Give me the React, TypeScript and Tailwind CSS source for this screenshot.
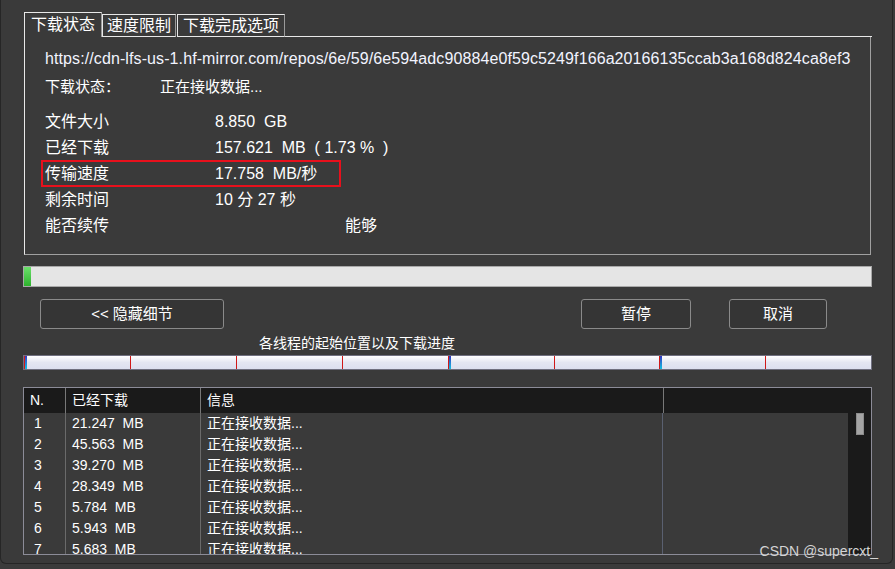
const FONT = "font-['Liberation_Sans','Noto_Sans_CJK_SC',sans-serif]"

const rows = [
  ['1', '21.247  MB'],
  ['2', '45.563  MB'],
  ['3', '39.270  MB'],
  ['4', '28.349  MB'],
  ['5', '5.784  MB'],
  ['6', '5.943  MB'],
  ['7', '5.683  MB'],
]

const info = [
  ['文件大小', '8.850  GB'],
  ['已经下载', '157.621  MB  ( 1.73 %  )'],
  ['传输速度', '17.758  MB/秒'],
  ['剩余时间', '10 分 27 秒'],
]

// thread start markers, k * 105.9px from the left edge
const markers = [0, 1, 2, 3, 4, 5, 6, 7]
const blue = [0, 4, 6]

export default function App() {
  return (
    <div className={`w-[895px] h-[569px] bg-[#3b3b3b] overflow-hidden ${FONT} text-white`}>
      <div className="relative w-[893px] h-[564px] bg-[#3a3a3a] border-l border-r border-b border-[#262626] rounded-b-[6px] px-[21px] pt-[12px]">
        {/* tabs */}
        <div className="flex items-end h-[25px] ml-[2px]">
          <div className="h-[25px] w-[78px] border-t border-l border-[#e8e8e8] border-r border-r-[#9a9a9a] flex items-center justify-center text-[16px] leading-none">
            下载状态
          </div>
          <div className="h-[23px] w-[74px] border-t border-l border-[#e8e8e8] border-r border-r-[#9a9a9a] border-b border-b-[#e8e8e8] flex items-center justify-center text-[16px] leading-none">
            速度限制
          </div>
          <div className="h-[23px] w-[108px] ml-[1px] border-t border-l border-[#e8e8e8] border-r border-r-[#9a9a9a] border-b border-b-[#e8e8e8] flex items-center justify-center text-[16px] leading-none">
            下载完成选项
          </div>
          <div className="flex-1 border-b border-[#e8e8e8] mr-[-1px]" />
        </div>

        {/* details panel */}
        <div className="ml-[2px] w-[847px] h-[218px] border-l border-[#e8e8e8] border-r border-b border-r-[#a0a0a0] border-b-[#a0a0a0] pl-[20px] pt-[9px]">
          <div className="h-[26px] flex items-center text-[16px] tracking-[0.1px] text-[#f2f4ff] whitespace-nowrap">
            https://cdn-lfs-us-1.hf-mirror.com/repos/6e/59/6e594adc90884e0f59c5249f166a20166135ccab3a168d824ca8ef3
          </div>
          <div className="h-[26px] mt-[2px] flex items-center text-[15px]">
            <span className="w-[115px]">下载状态：</span>
            <span>正在接收数据...</span>
          </div>
          <div className="mt-[9px]">
            {info.map(([k, v]) => (
              <div key={k} className="relative h-[26px] flex items-center text-[16px] whitespace-pre">
                <span className="w-[170px]">{k}</span>
                <span>{v}</span>
                {k === '传输速度' && (
                  <div className="absolute left-[-4px] top-[-1px] w-[300px] h-[27px] border-[2.5px] border-[#e8101c]" />
                )}
              </div>
            ))}
            <div className="h-[26px] flex items-center text-[16px]">
              <span className="w-[300px]">能否续传</span>
              <span>能够</span>
            </div>
          </div>
        </div>

        {/* overall progress */}
        <div className="mt-[11px] ml-[1px] w-[849px] h-[21px] border border-[#a8a8a8] bg-[#e5e5e5] flex">
          <div className="w-[7px] h-full bg-gradient-to-b from-[#6ae06a] to-[#2cb22c]" />
        </div>

        {/* buttons */}
        <div className="mt-[12px] flex h-[30px]">
          <button className="ml-[18px] w-[184px] h-[30px] border border-[#8a8a8a] rounded-[3px] bg-[#353535] text-[15px]">
            {'<< 隐藏细节'}
          </button>
          <button className="ml-[357px] w-[110px] h-[30px] border border-[#8a8a8a] rounded-[3px] bg-[#353535] text-[15px]">
            暂停
          </button>
          <button className="ml-[38px] w-[98px] h-[30px] border border-[#8a8a8a] rounded-[3px] bg-[#353535] text-[15px]">
            取消
          </button>
        </div>

        {/* per-thread progress */}
        <div className="mt-[6px] h-[16px] flex items-center pl-[237px] text-[14px] leading-none">
          各线程的起始位置以及下载进度
        </div>
        <div className="relative mt-[4px] ml-[1px] w-[849px] h-[15px] border border-[#707080] bg-gradient-to-b from-[#ffffff] via-[#e4e6f2] to-[#dcdfef]">
          {markers.map(k => (
            <div key={k} className="absolute top-0 bottom-0" style={{ left: Math.round(k * 105.9) }}>
              <div className="absolute top-0 bottom-0 left-0 w-[1px] bg-[#d01818]" />
              {blue.includes(k) && (
                <div className="absolute top-0 bottom-0 left-[1px] w-[2px] bg-gradient-to-b from-[#3030c0] to-[#10c0e0]" />
              )}
            </div>
          ))}
        </div>

        {/* thread table */}
        <div className="mt-[17px] ml-[1px] w-[849px] h-[168px] border border-[#8c8c98] bg-[#3a3a3a] flex flex-col text-[14px]">
          <div className="h-[25px] bg-[#1a1a1a] grid grid-cols-[41px_135px_463px_1fr] shrink-0">
            <div className="flex items-center pl-[6px]">N.</div>
            <div className="flex items-center pl-[6px] border-l border-[#787878]">已经下载</div>
            <div className="flex items-center pl-[6px] border-l border-[#787878]">信息</div>
            <div className="border-l border-[#787878]" />
          </div>
          <div className="flex flex-1 overflow-hidden">
            <div className="flex flex-1 overflow-hidden">
              <div className="w-[41px] shrink-0">
                {rows.map(([n]) => (
                  <div key={n} className="h-[21px] flex items-center pl-[10px]">{n}</div>
                ))}
              </div>
              <div className="w-[135px] shrink-0 border-l border-[#6a6a6a]">
                {rows.map(([n, v]) => (
                  <div key={n} className="h-[21px] flex items-center pl-[6px] whitespace-pre">{v}</div>
                ))}
              </div>
              <div className="w-[462px] shrink-0 border-l border-[#6a6a6a]">
                {rows.map(([n]) => (
                  <div key={n} className="h-[21px] flex items-center pl-[6px]">正在接收数据...</div>
                ))}
              </div>
              <div className="flex-1 border-l border-[#5a6070]" />
            </div>
            <div className="w-[23px] bg-[#1a1a1a] shrink-0 pl-[8px]">
              <div className="w-[8px] h-[22px] bg-[#a4a4a4] border border-[#8c8c8c]" />
            </div>
          </div>
        </div>

        <div className="absolute right-[14px] top-[541px] text-[14px] text-[#d4d4d4] font-['Liberation_Sans',sans-serif]">
          CSDN @supercxt_
        </div>
      </div>
    </div>
  )
}
